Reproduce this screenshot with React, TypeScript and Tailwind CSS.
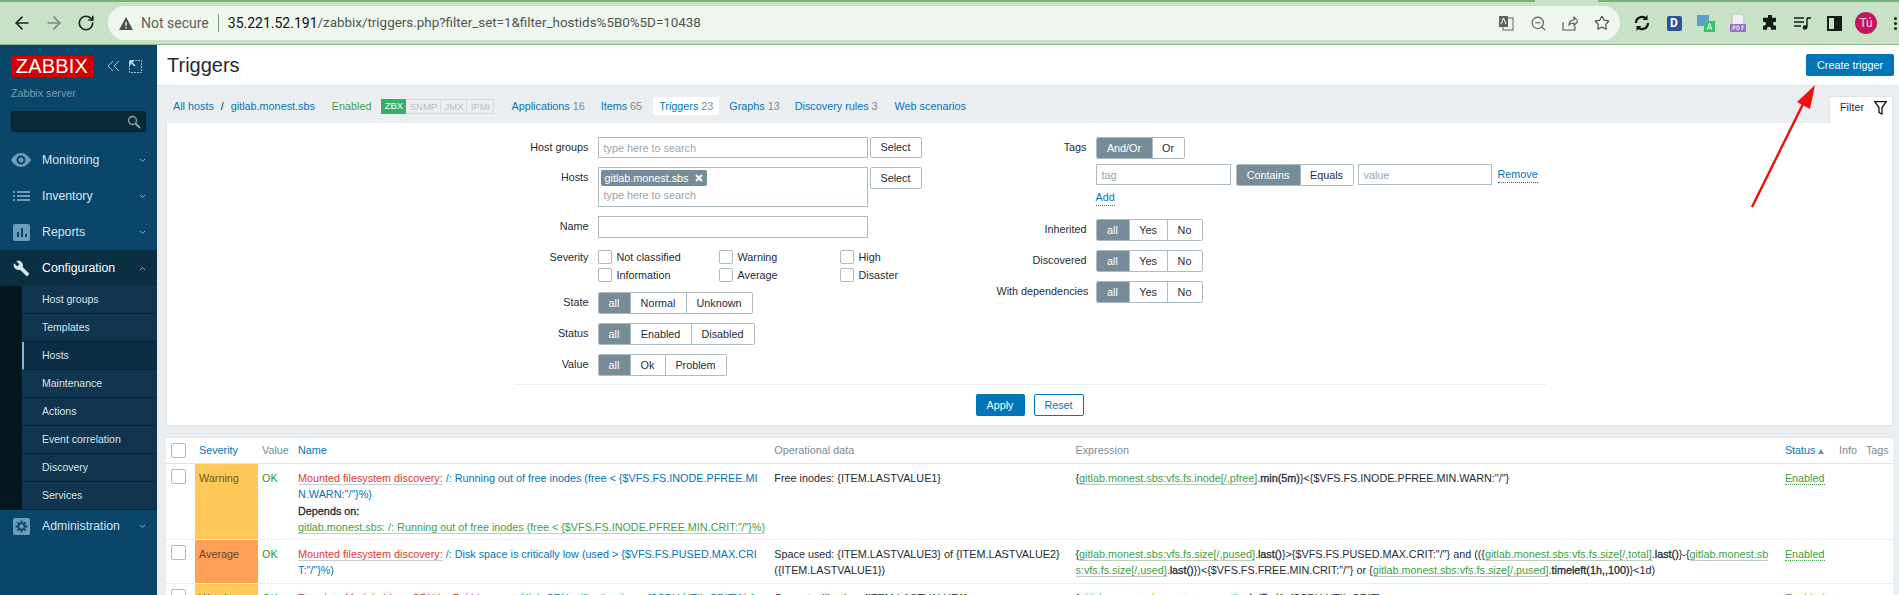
import { ArrowLeft, ArrowRight, RotateCw, Star, ZoomOut } from "lucide-react";
import { ReactNode } from "react";

const font = "font-['Liberation_Sans',Arial,sans-serif]";

function Segmented({ items }: { items: { label: string; w: string }[] }) {
  return (
    <div className="flex h-[22px] rounded-[2px] border border-[#acbbc2] overflow-hidden">
      {items.map((it, i) => (
        <div
          key={it.label}
          className={`${it.w} flex items-center justify-center ${i === 0 ? "bg-[#768d99] text-white" : "bg-white border-l border-[#acbbc2] text-[#1f2c33]"}`}
        >
          {it.label}
        </div>
      ))}
    </div>
  );
}

function Row({ label, w, children }: { label: string; w: string; children: ReactNode }) {
  return (
    <div className="flex gap-[9px]">
      <div className={`${w} shrink-0 whitespace-nowrap text-right leading-[20px] text-[#1f2c33]`}>{label}</div>
      <div>{children}</div>
    </div>
  );
}

function Check({ label }: { label: string }) {
  return (
    <label className="flex w-[121px] h-[14px] items-center gap-[5px] text-[#1f2c33]">
      <span className="w-[14px] h-[14px] rounded-[2px] border border-[#acbbc2] bg-white" />
      {label}
    </label>
  );
}

function TextBox({ w, h = "h-[21px]", placeholder }: { w: string; h?: string; placeholder?: string }) {
  return (
    <div className={`${w} ${h} border border-[#acbbc2] bg-white px-[5px] leading-[20px] text-[#9ba4a9]`}>{placeholder}</div>
  );
}

function SelectBtn({ h }: { h: string }) {
  return (
    <div className={`${h} w-[52px] flex items-center justify-center rounded-[2px] border border-[#acbbc2] bg-white text-[#1f2c33]`}>Select</div>
  );
}

function MenuItem({ icon, label, open, h = "h-[36px]" }: { icon: ReactNode; label: string; open?: boolean; h?: string }) {
  return (
    <div className={`${h} flex items-center pl-[12px] pr-[11px] ${open ? "bg-[#0a2e42] text-white" : "text-[#d7e4ec]"}`}>
      <div className="w-[18px] h-[18px] mr-[12px] flex items-center justify-center">{icon}</div>
      <span className="flex-1 text-[12.3px]">{label}</span>
      <svg width="7" height="5" viewBox="0 0 7 5" className={open ? "rotate-180" : ""}>
        <path d="M1 1l2.500 2.500L6 1" fill="none" stroke="#8fa9b9" strokeWidth="1" />
      </svg>
    </div>
  );
}

function SubItem({ label, active }: { label: string; active?: boolean }) {
  return (
    <div className={`h-[28px] flex items-center border-b border-[#0a2435] text-[10.5px] text-[#d7e4ec] ${active ? "bg-[#0c2d43] border-l-2 border-l-[#7bb9e0] pl-[18px]" : "bg-[#11344f] pl-[20px]"}`}>
      {label}
    </div>
  );
}

function Sidebar() {
  const icon = "#6d9dbb";
  return (
    <aside className="w-[157px] shrink-0 bg-[#0a466a] flex flex-col">
      <div className="flex items-center h-[32px] mt-[5px] pl-[11px]">
        <div className="w-[82px] h-[21px] bg-[#d40000] text-white text-[20px] leading-[21px] text-center tracking-[0.2px]">ZABBIX</div>
        <svg width="13" height="12" viewBox="0 0 13 12" className="ml-[14px]">
          <path d="M6 1L1 6l5 5M12 1L7 6l5 5" fill="none" stroke="#a9c1d1" strokeWidth="1" />
        </svg>
        <svg width="13" height="13" viewBox="0 0 13 13" className="ml-[9px]">
          <path d="M3 .5h9.500v12H.5V3" fill="none" stroke="#a9c1d1" strokeWidth="1" strokeDasharray="2 1" />
          <path d="M1 1l5 5M1 5V1h4" fill="none" stroke="#dbe6ed" strokeWidth="1.500" />
        </svg>
      </div>
      <div className="mt-[3px] pl-[11px] text-[10.700px] text-[#7d9db2] leading-[16px]">Zabbix server</div>
      <div className="mx-[11px] mt-[10px] h-[21px] rounded-[2px] border border-[#06202f] bg-[#0b2838] flex items-center justify-end pr-[4px]">
        <svg width="14" height="14" viewBox="0 0 14 14">
          <circle cx="5.500" cy="5.500" r="4" fill="none" stroke="#8ba3b2" strokeWidth="1.300" />
          <path d="M8.500 8.500l4.500 4.500" stroke="#8ba3b2" strokeWidth="1.800" />
        </svg>
      </div>
      <nav className="mt-[10px]">
        <MenuItem
          label="Monitoring"
          icon={
            <svg width="20" height="14" viewBox="0 0 20 14" className="shrink-0">
              <path fillRule="evenodd" fill={icon} d="M10 0c4.500 0 8 3.500 10 7-2 3.500-5.500 7-10 7S2 10.500 0 7c2-3.500 5.500-7 10-7zm0 2.500a4.500 4.500 0 100 9 4.500 4.500 0 000-9zm0 2a2.500 2.500 0 110 5 2.500 2.500 0 010-5z" />
            </svg>
          }
        />
        <MenuItem
          label="Inventory"
          icon={
            <svg width="17" height="10" viewBox="0 0 17 10">
              <path fill={icon} d="M0 0h2v2H0zM4 0h13v2H4zM0 4h2v2H0zM4 4h13v2H4zM0 8h2v2H0zM4 8h13v2H4z" />
            </svg>
          }
        />
        <MenuItem
          label="Reports"
          icon={
            <svg width="17" height="17" viewBox="0 0 17 17">
              <rect width="17" height="17" rx="2" fill={icon} />
              <path fill="#0a466a" d="M4 8h2v5H4zM8 4h2v9H8zM12 10h2v3h-2z" />
            </svg>
          }
        />
        <MenuItem
          open
          label="Configuration"
          icon={
            <svg width="17" height="17" viewBox="0 0 24 24">
              <path fill="#d7e4ec" d="M22.700 19l-9.100-9.100c.9-2.300.4-5-1.500-6.900-2-2-5-2.400-7.400-1.300L9 6 6 9 1.600 4.700C.4 7.100.9 10.100 2.900 12.100c1.900 1.900 4.600 2.400 6.900 1.500l9.100 9.100c.4.4 1 .4 1.400 0l2.300-2.300c.5-.4.500-1.100.1-1.400z" />
            </svg>
          }
        />
        <div className="flex">
          <div className="w-[22px] bg-[#04161f]" />
          <div className="flex-1">
            <SubItem label="Host groups" />
            <SubItem label="Templates" />
            <SubItem label="Hosts" active />
            <SubItem label="Maintenance" />
            <SubItem label="Actions" />
            <SubItem label="Event correlation" />
            <SubItem label="Discovery" />
            <SubItem label="Services" />
          </div>
        </div>
        <MenuItem
          h="h-[32px]"
          label="Administration"
          icon={
            <svg width="17" height="17" viewBox="0 0 17 17">
              <rect width="17" height="17" rx="2" fill={icon} />
              <circle cx="8.500" cy="8.500" r="3.200" fill="none" stroke="#0a466a" strokeWidth="2" />
              <path stroke="#0a466a" strokeWidth="1.800" d="M8.500 2.500v2M8.500 12.500v2M2.500 8.500h2M12.500 8.500h2M4.300 4.300l1.400 1.400M11.300 11.300l1.400 1.400M12.700 4.300l-1.400 1.400M5.700 11.300l-1.400 1.400" />
            </svg>
          }
        />
      </nav>
    </aside>
  );
}

function Slot({ children }: { children: ReactNode }) {
  return <div className="w-[32px] flex items-center justify-center">{children}</div>;
}

function ChromeBar() {
  return (
    <header className="shrink-0 bg-[#c7e2c6] border-b border-[#8fb58f] font-['Roboto',sans-serif]">
      <div className="flex h-[2px]">
        <div className="w-[1535px] bg-[#76b47a]" />
        <div className="w-[63px]" />
        <div className="flex-1 bg-[#76b47a]" />
      </div>
      <div className="h-[42px] flex items-center pl-[12px]">
        <ArrowLeft size={20} strokeWidth={2} className="text-[#1c2a1e]" />
        <ArrowRight size={20} strokeWidth={2} className="ml-[12px] text-[#7d8a7d]" />
        <RotateCw size={18} strokeWidth={2.200} className="ml-[13px] text-[#1c2a1e]" />
        <div className="ml-[13px] w-[1512px] h-[34px] rounded-full bg-[#eff6ee] flex items-center pl-[11px] pr-[2px] text-[14px]">
          <svg width="14" height="13" viewBox="0 0 14 13" className="shrink-0">
            <path fill="#4a524b" d="M7 0l7 13H0zM6.300 5v4h1.400V5zm0 5v1.500h1.400V10z" fillRule="evenodd" />
          </svg>
          <span className="ml-[8px] text-[#5a625b]">Not secure</span>
          <span className="mx-[9px] w-px h-[18px] bg-[#8a938b]" />
          <span className="text-[#111]">35.221.52.191</span>
          <span className="text-[13.400px] text-[#4f5750]">/zabbix/triggers.php?filter_set=1&amp;filter_hostids%5B0%5D=10438</span>
          <span className="flex-1" />
          <Slot>
            <svg width="16" height="16" viewBox="0 0 16 16">
              <rect x="5" y="3" width="10" height="12" fill="none" stroke="#5f6660" />
              <rect x="1" y="1" width="9" height="11" fill="#5f6660" />
              <path d="M3 9l2.500-6L8 9" fill="none" stroke="#fff" />
            </svg>
          </Slot>
          <Slot><ZoomOut size={17} strokeWidth={1.500} className="text-[#4f5750]" /></Slot>
          <Slot>
            <svg width="16" height="16" viewBox="0 0 16 16">
              <path d="M1 7v8h12v-4M7 10c0-4 3-5 5-5V2l4 4.500-4 4V8c-2 0-4 .5-5 2z" fill="none" stroke="#4f5750" strokeWidth="1.100" />
            </svg>
          </Slot>
          <Slot><Star size={16} strokeWidth={1.800} className="text-[#4f5750]" /></Slot>
        </div>
        <div className="ml-[6px] flex items-center">
          <Slot>
            <svg width="16" height="18" viewBox="0 0 16 18">
              <path d="M2 9a6 6 0 0110-4.500M14 9A6 6 0 014 13.500" fill="none" stroke="#111" strokeWidth="2.200" />
              <path d="M13.500 1v5h-5zM2.500 17v-5h5z" fill="#111" />
            </svg>
          </Slot>
          <Slot>
            <div className="w-[15px] h-[15px] rounded-[2px] bg-[#2f539b] text-white text-[12px] font-bold leading-[15px] text-center">D</div>
          </Slot>
          <Slot>
            <svg width="18" height="17" viewBox="0 0 18 17">
              <rect width="12" height="11" fill="#5aa2c9" />
              <rect x="7" y="6" width="11" height="11" fill="#37c26c" />
              <path d="M10 15l2.500-7L15 15M11 13h3" fill="none" stroke="#fff" />
            </svg>
          </Slot>
          <Slot>
            <svg width="16" height="18" viewBox="0 0 16 18">
              <path d="M2 0h9l3 3v8H2z" fill="#eef0f2" stroke="#b8bcc0" />
              <rect y="10" width="16" height="8" fill="#9a6fc4" />
              <path d="M3 16v-4h2v2H3M7 12v4h1.500l1-2-1-2zM12 16v-4h2M12 14h1.500" fill="none" stroke="#fff" strokeWidth=".8" />
            </svg>
          </Slot>
          <Slot>
            <svg width="16" height="16" viewBox="0 0 16 16">
              <path fill="#161b17" d="M6 1a2 2 0 014 0v2h4v4h-1a2 2 0 000 4h1v4H9v-1a2 2 0 00-4 0v1H1v-4h1a2 2 0 000-4H1V3h5z" transform="translate(0 -.3)" />
            </svg>
          </Slot>
          <Slot>
            <svg width="17" height="13" viewBox="0 0 17 13">
              <path d="M0 1h10M0 5h10M0 9h7" stroke="#161b17" strokeWidth="1.400" />
              <path d="M13 1v9" stroke="#161b17" strokeWidth="1.400" />
              <path d="M13 1h4" stroke="#161b17" strokeWidth="1.600" />
              <circle cx="11" cy="10.500" r="2.300" fill="#161b17" />
            </svg>
          </Slot>
          <Slot>
            <div className="w-[15px] h-[15px] border-[2.500px] border-[#161b17] flex justify-end">
              <div className="w-[6px] h-full bg-[#161b17]" />
            </div>
          </Slot>
          <Slot>
            <div className="w-[22px] h-[22px] rounded-full bg-[#c2185b] text-[#f7d6e4] text-[12px] leading-[22px] text-center">Tú</div>
          </Slot>
          <div className="ml-[12px] flex flex-col gap-[2px]">
            <span className="w-[3px] h-[3px] rounded-full bg-[#161b17]" />
            <span className="w-[3px] h-[3px] rounded-full bg-[#161b17]" />
            <span className="w-[3px] h-[3px] rounded-full bg-[#161b17]" />
          </div>
        </div>
      </div>
    </header>
  );
}

function TabLink({ label, count, cls }: { label: string; count?: string; cls: string }) {
  return (
    <div className={`${cls} text-[#0275b8]`}>
      {label}
      {count && <span className="ml-[3px] text-[#768d99]">{count}</span>}
    </div>
  );
}

function TabStrip() {
  return (
    <div className="h-[37px] flex pl-[16px] pr-[6px]">
      <div className="flex items-center h-[36px] mt-[2px]">
        <span className="text-[#0275b8]">All hosts</span>
        <span className="mx-[7px] text-[#1f2c33]">/</span>
        <span className="text-[#0275b8]">gitlab.monest.sbs</span>
        <span className="ml-[17px] text-[#429e47]">Enabled</span>
        <div className="ml-[10px] flex h-[15px] text-[9.500px] leading-[14px] text-center text-[#b5c0c6]">
          <div className="w-[25px] bg-[#34af67] text-white">ZBX</div>
          <div className="w-[35px] border border-[#d5dcdf] border-l-0">SNMP</div>
          <div className="w-[26px] border border-[#d5dcdf] border-l-0">JMX</div>
          <div className="w-[27px] border border-[#d5dcdf] border-l-0">IPMI</div>
        </div>
        <TabLink cls="ml-[17px]" label="Applications" count="16" />
        <TabLink cls="ml-[16px]" label="Items" count="65" />
        <TabLink cls="ml-[11px] h-[18px] leading-[18px] bg-white px-[6px]" label="Triggers" count="23" />
        <TabLink cls="ml-[10px]" label="Graphs" count="13" />
        <TabLink cls="ml-[15px]" label="Discovery rules" count="3" />
        <TabLink cls="ml-[17px]" label="Web scenarios" />
      </div>
      <div className="ml-auto self-end h-[27px] w-[64px] bg-white border border-b-0 border-[#dfe4e7] flex items-center pb-[5px] pl-[10px] text-[#1f2c33]">
        Filter
        <svg width="13" height="14" viewBox="0 0 13 14" className="ml-[10px]">
          <path d="M.7.7h11.600L8 6.500V13l-3-1.500v-5z" fill="none" stroke="#111" strokeWidth="1.300" />
        </svg>
      </div>
    </div>
  );
}

function FilterPanel() {
  const allYesNo = [
    { label: "all", w: "w-[32px]" },
    { label: "Yes", w: "w-[38px]" },
    { label: "No", w: "w-[35px]" },
  ];
  return (
    <section className="mr-[6px] ml-[9px] h-[303px] bg-white border border-t-0 border-[#dfe4e7] pt-[14px]">
      <div className="w-[1032px] mx-auto">
        <div className="flex h-[248px] border-b border-[#ebeef0]">
          <div className="w-[483px] shrink-0 flex flex-col gap-[9px]">
            <Row label="Host groups" w="w-[75px]">
              <div className="flex gap-[2px]">
                <TextBox w="w-[270px]" placeholder="type here to search" />
                <SelectBtn h="h-[21px]" />
              </div>
            </Row>
            <Row label="Hosts" w="w-[75px]">
              <div className="flex gap-[2px]">
                <div className="w-[270px] h-[40px] border border-[#acbbc2] bg-white pl-[2px] pt-[2px]">
                  <div className="inline-flex h-[16px] items-center gap-[6px] rounded-[2px] bg-[#768d99] px-[4px] text-white">
                    gitlab.monest.sbs
                    <svg width="8" height="8" viewBox="0 0 8 8">
                      <path d="M1 1l6 6M7 1L1 7" stroke="#fff" strokeWidth="2" />
                    </svg>
                  </div>
                  <div className="pl-[3px] leading-[18px] text-[#9ba4a9]">type here to search</div>
                </div>
                <SelectBtn h="h-[22px]" />
              </div>
            </Row>
            <Row label="Name" w="w-[75px]">
              <TextBox w="w-[270px]" h="h-[22px]" />
            </Row>
            <div className="flex gap-[9px] pt-[3px] pb-px">
              <div className="w-[75px] text-right leading-[14px] text-[#1f2c33]">Severity</div>
              <div className="grid grid-cols-[121px_121px_121px] gap-y-[4px]">
                <Check label="Not classified" />
                <Check label="Warning" />
                <Check label="High" />
                <Check label="Information" />
                <Check label="Average" />
                <Check label="Disaster" />
              </div>
            </div>
            <Row label="State" w="w-[75px]">
              <Segmented items={[{ label: "all", w: "w-[31px]" }, { label: "Normal", w: "w-[56px]" }, { label: "Unknown", w: "w-[66px]" }]} />
            </Row>
            <Row label="Status" w="w-[75px]">
              <Segmented items={[{ label: "all", w: "w-[31px]" }, { label: "Enabled", w: "w-[61px]" }, { label: "Disabled", w: "w-[63px]" }]} />
            </Row>
            <Row label="Value" w="w-[75px]">
              <Segmented items={[{ label: "all", w: "w-[31px]" }, { label: "Ok", w: "w-[35px]" }, { label: "Problem", w: "w-[61px]" }]} />
            </Row>
          </div>
          <div className="flex-1 flex flex-col">
            <Row label="Tags" w="w-[90px]">
              <Segmented items={[{ label: "And/Or", w: "w-[55px]" }, { label: "Or", w: "w-[32px]" }]} />
            </Row>
            <div className="ml-[99px] mt-[5px] flex items-start gap-[5px]">
              <TextBox w="w-[135px]" placeholder="tag" />
              <Segmented items={[{ label: "Contains", w: "w-[63px]" }, { label: "Equals", w: "w-[53px]" }]} />
              <TextBox w="w-[134px] -ml-px" placeholder="value" />
              <span className="ml-px leading-[15px] mt-[3px] text-[#0275b8] border-b border-dotted border-[#0275b8]">Remove</span>
            </div>
            <div className="ml-[99px] mt-[3px] h-[18px]">
              <span className="leading-[15px] inline-block mt-px text-[#0275b8] border-b border-dotted border-[#0275b8]">Add</span>
            </div>
            <div className="mt-[12px] flex flex-col gap-[9px]">
              <Row label="Inherited" w="w-[90px]"><Segmented items={allYesNo} /></Row>
              <Row label="Discovered" w="w-[90px]"><Segmented items={allYesNo} /></Row>
              <Row label="With dependencies" w="w-[90px]"><Segmented items={allYesNo} /></Row>
            </div>
          </div>
        </div>
        <div className="mt-[9px] flex justify-center gap-[9px]">
          <div className="w-[49px] h-[22px] rounded-[2px] bg-[#0275b8] text-white flex items-center justify-center">Apply</div>
          <div className="w-[50px] h-[22px] rounded-[2px] border border-[#0275b8] text-[#0275b8] flex items-center justify-center">Reset</div>
        </div>
      </div>
    </section>
  );
}

const Box = () => <span className="block w-[15px] h-[15px] rounded-[2px] border border-[#acbbc2] bg-white" />;
const G = ({ children }: { children: ReactNode }) => (
  <span className="text-[#429e47] border-b border-[#bcd0bc]">{children}</span>
);
const B = ({ children }: { children: ReactNode }) => <b className="font-normal [-webkit-text-stroke:0.3px_#1f2c33]">{children}</b>;
const Red = () => <span className="text-[#e33734] border-b border-[#c9ced1]">Mounted filesystem discovery:</span>;

function TriggersTable() {
  const td = "align-top px-[4px] pt-[6px] leading-[16px]";
  return (
    <section className="mt-[11px] ml-[9px] mr-[6px] bg-white border-t border-[#dfe4e7]">
      <table className="table-fixed w-full border-collapse">
        <colgroup>
          <col className="w-[29px]" />
          <col className="w-[63px]" />
          <col className="w-[36px]" />
          <col className="w-[476px]" />
          <col className="w-[301px]" />
          <col className="w-[709px]" />
          <col className="w-[54px]" />
          <col className="w-[27px]" />
          <col className="w-[31px]" />
        </colgroup>
        <thead>
          <tr className="h-[25px] border-b border-[#dfe4e7] text-left text-[#768d99]">
            <th className="font-normal pl-[5px]"><Box /></th>
            <th className="font-normal px-[4px] text-[#0275b8]">Severity</th>
            <th className="font-normal px-[4px]">Value</th>
            <th className="font-normal px-[4px] text-[#0275b8]">Name</th>
            <th className="font-normal px-[4px]">Operational data</th>
            <th className="font-normal px-[4px]">Expression</th>
            <th className="font-normal px-[4px] text-[#0275b8] whitespace-nowrap">
              Status
              <svg width="6" height="5" viewBox="0 0 6 5" className="inline ml-[2px]"><path d="M3 0l3 5H0z" fill="#768d99" /></svg>
            </th>
            <th className="font-normal px-[4px]">Info</th>
            <th className="font-normal px-[4px]">Tags</th>
          </tr>
        </thead>
        <tbody className="text-[#1f2c33]">
          <tr className="h-[76px] border-b border-[#ebeef0]">
            <td className="align-top pl-[5px] pt-[5px]"><Box /></td>
            <td className={`${td} bg-[#ffc859] text-[#6b5a28]`}>Warning</td>
            <td className={`${td} text-[#1f9c1f]`}>OK</td>
            <td className={`${td} whitespace-nowrap text-[#0275b8]`}>
              <Red /> /: Running out of free inodes (free &lt; {"{$VFS.FS.INODE.PFREE.MI"}
              <br />
              {'N.WARN:"/"}%)'}
              <div className="mt-px text-[#1f2c33] [-webkit-text-stroke:0.3px_#1f2c33]">Depends on:</div>
              <G>gitlab.monest.sbs: /: Running out of free inodes (free &lt; {'{$VFS.FS.INODE.PFREE.MIN.CRIT:"/"}%)'}</G>
            </td>
            <td className={td}>Free inodes: {"{ITEM.LASTVALUE1}"}</td>
            <td className={`${td} whitespace-nowrap`}>
              {"{"}<G>gitlab.monest.sbs:vfs.fs.inode[/,pfree]</G>.<B>min(5m)</B>{'}<{$VFS.FS.INODE.PFREE.MIN.WARN:"/"}'}
            </td>
            <td className={td}><span className="text-[#429e47] border-b border-dotted border-[#429e47]">Enabled</span></td>
            <td />
            <td />
          </tr>
          <tr className="h-[44px] border-b border-[#ebeef0]">
            <td className="align-top pl-[5px] pt-[5px]"><Box /></td>
            <td className={`${td} bg-[#ffa059] text-[#6b4426]`}>Average</td>
            <td className={`${td} text-[#1f9c1f]`}>OK</td>
            <td className={`${td} whitespace-nowrap text-[#0275b8]`}>
              <Red /> /: Disk space is critically low (used &gt; {"{$VFS.FS.PUSED.MAX.CRI"}
              <br />
              {'T:"/"}%)'}
            </td>
            <td className={td}>
              Space used: {"{ITEM.LASTVALUE3}"} of {"{ITEM.LASTVALUE2}"} ({"{ITEM.LASTVALUE1}"})
            </td>
            <td className={`${td} whitespace-nowrap`}>
              {"{"}<G>gitlab.monest.sbs:vfs.fs.size[/,pused]</G>.<B>last()</B>{'}>{$VFS.FS.PUSED.MAX.CRIT:"/"} and (({'}
              <G>gitlab.monest.sbs:vfs.fs.size[/,total]</G>.<B>last()</B>{"}-{"}<G>gitlab.monest.sb</G>
              <br />
              <G>s:vfs.fs.size[/,used]</G>.<B>last()</B>{'})<{$VFS.FS.FREE.MIN.CRIT:"/"} or {'}
              <G>gitlab.monest.sbs:vfs.fs.size[/,pused]</G>.<B>timeleft(1h,,100)</B>{"}<1d)"}
            </td>
            <td className={td}><span className="text-[#429e47] border-b border-dotted border-[#429e47]">Enabled</span></td>
            <td />
            <td />
          </tr>
          <tr>
            <td className="align-top pl-[5px] pt-[5px]"><Box /></td>
            <td className={`${td} bg-[#ffc859] text-[#6b5a28]`}>Warning</td>
            <td className={`${td} text-[#1f9c1f]`}>OK</td>
            <td className={`${td} break-all text-[#0275b8]`}>
              <span className="text-[#e33734]">Template Module Linux CPU by Zabbix agent:</span> High CPU utilization (over {"{$CPU.UTIL.CRIT}"}% for 5m)
            </td>
            <td className={td}>Current utilization: {"{ITEM.LASTVALUE1}"}</td>
            <td className={`${td} whitespace-nowrap`}>
              {"{"}<G>gitlab.monest.sbs:system.cpu.util</G>.<B>min(5m)</B>{"}>{$CPU.UTIL.CRIT}"}
            </td>
            <td className={td}><span className="text-[#429e47]">Enabled</span></td>
            <td />
            <td />
          </tr>
        </tbody>
      </table>
    </section>
  );
}

export default function App() {
  return (
    <div className={`${font} relative h-[595px] w-[1899px] overflow-hidden flex flex-col bg-[#ebeef0] text-[10.800px]`}>
      <ChromeBar />
      <div className="flex flex-1 min-h-0">
        <Sidebar />
        <main className="flex-1 min-w-0 overflow-hidden">
          <div className="h-[41px] bg-white border-b border-[#dfe4e7] flex items-center justify-between pl-[10px] pr-[5px]">
            <h1 className="text-[20px] text-[#1f2c33]">Triggers</h1>
            <div className="w-[88px] h-[22px] rounded-[2px] bg-[#0275b8] text-white flex items-center justify-center">Create trigger</div>
          </div>
          <TabStrip />
          <FilterPanel />
          <TriggersTable />
        </main>
      </div>
      <svg width="70" height="128" viewBox="0 0 70 128" className="absolute left-[1750px] top-[82px]">
        <path d="M2 125L56 16" stroke="#f40f0f" strokeWidth="2.500" />
        <path d="M65 3L60 27L47 20z" fill="#f40f0f" />
      </svg>
    </div>
  );
}
